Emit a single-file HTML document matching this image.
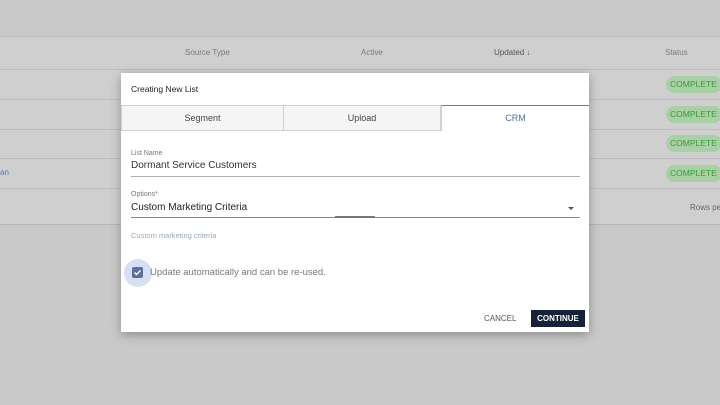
<!DOCTYPE html>
<html><head><style>
*{margin:0;padding:0;box-sizing:border-box}
body{width:720px;height:405px;overflow:hidden;background:#c9c9c9;font-family:"Liberation Sans",sans-serif;position:relative}
.a{position:absolute;white-space:nowrap}
.t{font-size:8px;color:#7a7a7a}
.badge{position:absolute;left:666px;width:56px;height:17px;border-radius:9px;background:#a9cfa5;color:#3f9a3c;font-size:8.5px;line-height:17px;padding-left:4px;white-space:nowrap}
.line{position:absolute;left:0;width:720px;height:1px;background:#bdbdbd}
</style></head><body>
<div class="a" style="left:0;top:36px;width:720px;height:189px;background:#cfcfcf"></div>
<div class="line" style="top:36px"></div>
<div class="line" style="top:69px"></div>
<div class="line" style="top:99px"></div>
<div class="line" style="top:129px"></div>
<div class="line" style="top:158px"></div>
<div class="line" style="top:188px"></div>
<div class="line" style="top:224px;background:#b5b5b5"></div>
<div class="a t" style="left:185px;top:48px">Source Type</div>
<div class="a t" style="left:361px;top:48px">Active</div>
<div class="a t" style="left:494px;top:48px;color:#555">Updated ↓</div>
<div class="a t" style="left:665px;top:48px">Status</div>
<div class="badge" style="top:76px">COMPLETE</div>
<div class="badge" style="top:106px">COMPLETE</div>
<div class="badge" style="top:135px">COMPLETE</div>
<div class="badge" style="top:165px">COMPLETE</div>
<div class="a t" style="left:0;top:168px;color:#5a76b0">an</div>
<div class="a t" style="left:690px;top:203px;color:#666">Rows per</div>

<div class="a" style="left:121px;top:73px;width:468px;height:259px;background:#fff;box-shadow:0 3px 10px rgba(0,0,0,.3)">
  <div class="a" style="left:10px;top:11px;font-size:8.5px;color:#222">Creating New List</div>
  <div class="a" style="left:0;top:32px;width:163px;height:26px;background:#f5f5f5;border:1px solid #d0d0d0;font-size:9px;color:#444;text-align:center;line-height:24px">Segment</div>
  <div class="a" style="left:163px;top:32px;width:157px;height:26px;background:#f5f5f5;border:1px solid #d0d0d0;border-left:none;font-size:9px;color:#444;text-align:center;line-height:24px">Upload</div>
  <div class="a" style="left:320px;top:32px;width:148px;height:26px;background:#fff;border-top:1px solid #5a7fb0;border-left:1px solid #d0d0d0;font-size:9px;color:#4a6fa5;text-align:center;line-height:24px">CRM</div>
  <div class="a" style="left:10px;top:77px;font-size:7px;color:#777">List Name</div>
  <div class="a" style="left:10px;top:87px;font-size:10px;color:#333">Dormant Service Customers</div>
  <div class="a" style="left:10px;top:103px;width:449px;height:1px;background:#b0b0b0"></div>
  <div class="a" style="left:10px;top:118px;font-size:7px;color:#777">Options*</div>
  <div class="a" style="left:10px;top:129px;font-size:10px;color:#222">Custom Marketing Criteria</div>
  <div class="a" style="left:447px;top:134px;width:0;height:0;border-left:3.5px solid transparent;border-right:3.5px solid transparent;border-top:3.5px solid #555"></div>
  <div class="a" style="left:10px;top:144px;width:449px;height:1px;background:#888"></div>
  <div class="a" style="left:214px;top:143px;width:40px;height:2px;background:#777"></div>
  <div class="a" style="left:10px;top:158px;font-size:7.5px;color:#9aa6c0">Custom marketing criteria</div>
  <div class="a" style="left:3px;top:186px;width:28px;height:28px;border-radius:50%;background:#d6e0f3"></div>
  <div class="a" style="left:11px;top:194px;width:11px;height:11px;border-radius:2px;background:#5a6f9a"></div>
  <svg class="a" style="left:11px;top:194px" width="11" height="11"><path d="M2.5 5.5 L4.5 7.5 L8.5 3.5" stroke="#fff" stroke-width="1.4" fill="none"/></svg>
  <div class="a" style="left:29px;top:194px;font-size:9.5px;color:#777">Update automatically and can be re-used.</div>
  <div class="a" style="left:363px;top:241px;font-size:8px;color:#555">CANCEL</div>
  <div class="a" style="left:410px;top:237px;width:54px;height:17px;background:#18213a;color:#fff;font-size:8px;font-weight:bold;text-align:center;line-height:17px">CONTINUE</div>
</div>
</body></html>
